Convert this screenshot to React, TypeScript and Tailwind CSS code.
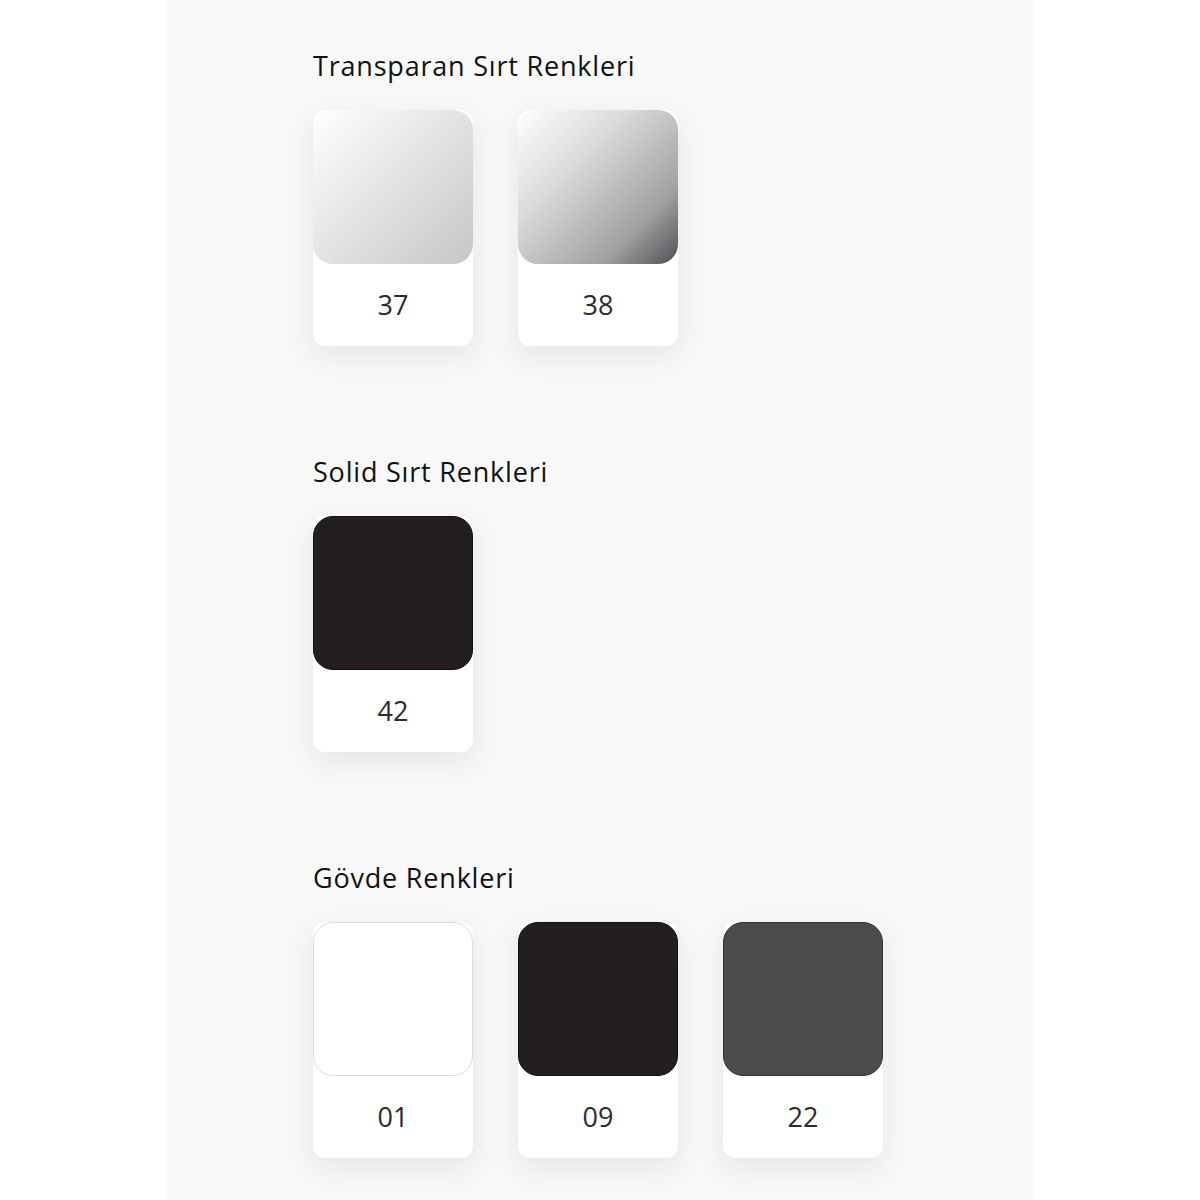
const SECTIONS = [
  {
    title: "Transparan Sırt Renkleri",
    items: [
      { code: "37", swatch: "bg-[linear-gradient(135deg,#ffffff_0%,#e8e8e9_40%,#c6c6c8_100%)]" },
      { code: "38", swatch: "bg-[linear-gradient(135deg,#ffffff_0%,#dadadb_35%,#a2a2a4_75%,#505054_100%)]" },
    ],
  },
  {
    title: "Solid Sırt Renkleri",
    items: [{ code: "42", swatch: "bg-[#231f20] border border-[#111]" }],
  },
  {
    title: "Gövde Renkleri",
    items: [
      { code: "01", swatch: "bg-white border border-[#dcdcdc]" },
      { code: "09", swatch: "bg-[#231f20] border border-[#111]" },
      { code: "22", swatch: "bg-[#4b4a4c] border border-[#333]" },
    ],
  },
];

export default function App() {
  return (
    <div className="flex min-h-[1200px] justify-center bg-white font-['Open_Sans',sans-serif]">
      <div className="w-[866px] bg-[#f8f8f8] pl-[146px] pt-[46px]">
        {SECTIONS.map((s) => (
          <section key={s.title} className="mb-[106px]">
            <h2 className="text-[27px] leading-[40px] tracking-[0.8px] text-[#111]">{s.title}</h2>
            <div className="mt-[24px] flex gap-[45px]">
              {s.items.map((it) => (
                <div
                  key={it.code}
                  className="flex h-[236px] w-[160px] flex-col rounded-[12px] bg-white shadow-[0_10px_30px_rgba(0,0,0,0.08)]"
                >
                  <div className={`h-[154px] w-full rounded-[20px] ${it.swatch}`} />
                  <div className="flex flex-1 items-center justify-center text-[27px] text-[#2b2b2b]">
                    {it.code}
                  </div>
                </div>
              ))}
            </div>
          </section>
        ))}
      </div>
    </div>
  );
}
